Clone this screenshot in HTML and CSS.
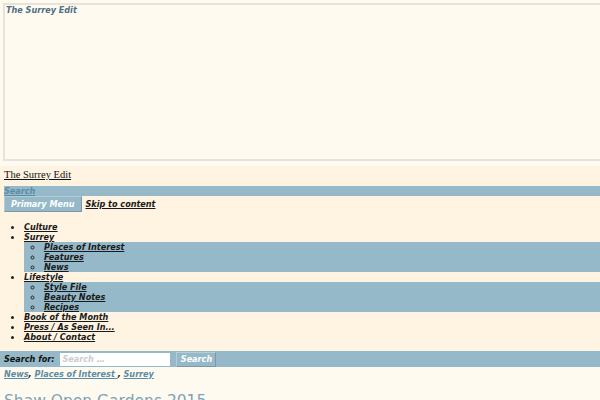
FILE: index.html
```html
<!DOCTYPE html>
<html>
<head>
<meta charset="utf-8">
<link rel="stylesheet" href="styles.css">
</head>
<body>
<div class="frame"><span class="frame-title">The Surrey Edit</span></div>
<header class="masthead">
  <a class="site-title" href="#">The Surrey Edit</a>
  <div class="search-toggle"><a href="#">Search </a></div>
  <div class="menu-row">
    <button class="menu-btn">Primary Menu</button>
    <a class="skip" href="#">Skip to content </a>
  </div>
  <ul class="menu">
    <li><a href="#">Culture </a></li>
    <li><a href="#">Surrey </a>
      <ul class="sub">
        <li><a href="#">Places of Interest </a></li>
        <li><a href="#">Features </a></li>
        <li><a href="#">News </a></li>
      </ul>
    </li>
    <li><a href="#">Lifestyle </a>
      <ul class="sub">
        <li><a href="#">Style File </a></li>
        <li><a href="#">Beauty Notes </a></li>
        <li><a href="#">Recipes </a></li>
      </ul>
    </li>
    <li><a href="#">Book of the Month </a></li>
    <li><a href="#">Press / As Seen In... </a></li>
    <li><a href="#">About / Contact </a></li>
  </ul>
</header>
<form class="search-form">
  <label class="search-label">Search for:</label>
  <input class="search-input" type="text" placeholder="Search …">
  <button class="search-btn" type="button">Search</button>
</form>
<div class="cats"><a href="#">News</a>, <a href="#">Places of Interest </a>, <a href="#">Surrey </a></div>
<h1 class="entry-title">Shaw Open Gardens 2015</h1>
</body>
</html>
```

FILE: styles.css
```css
html, body {
  margin: 0;
  padding: 0;
  background: #fffaf0;
  overflow: hidden;
}
body {
  font-family: "DejaVu Sans", sans-serif;
  font-stretch: condensed;
  font-size: 9px;
  line-height: 10px;
  color: #222;
}
.frame {
  margin: 3px 0 0 3px;
  border: 2px solid #e7e3db;
  border-right: none;
  padding: 0 0 0 1px;
  box-sizing: border-box;
  height: 158px;
}
.frame-title {
  font-weight: bold;
  font-style: italic;
  font-size: 9px;
  line-height: 10px;
  color: #4f6f82;
}
.masthead {
  margin-top: 5px;
  background: #fff3e1;
  padding: 3px 0 9px 4px;
}
.site-title {
  display: block;
  font-family: "Liberation Serif", serif;
  font-stretch: normal;
  font-size: 10.5px;
  line-height: 12px;
  color: #111;
  text-decoration: underline;
  width: max-content;
}
.search-toggle {
  margin-top: 5px;
  background: #95b9c9;
  height: 10px;
  line-height: 10px;
}
.search-toggle a {
  font-weight: bold;
  font-style: italic;
  color: #5b8ca5;
}
.menu-row {
  display: flex;
  align-items: flex-start;
  gap: 4px;
  height: 16px;
}
.menu-btn {
  font-family: "DejaVu Sans", sans-serif;
  font-stretch: condensed;
  font-weight: bold;
  font-style: italic;
  font-size: 9px;
  color: #fff;
  background: #95b9c9;
  border: 1px solid #7f98a6;
  border-top-color: #b5cdd8;
  border-left-color: #b5cdd8;
  padding: 0 6px;
  height: 16px;
  line-height: 12px;
  margin: 0;
}
.skip {
  font-weight: bold;
  font-style: italic;
  color: #1a1a1a;
  margin-top: 3px;
}
.menu {
  margin: 10px 0 0 0;
  padding-left: 20px;
  list-style: disc;
}
.menu li::marker {
  font-size: 11px;
}
.menu a {
  font-weight: bold;
  font-style: italic;
  color: #1a1a1a;
}
.sub {
  margin: 0;
  padding-left: 20px;
  background: #95b9c9;
  list-style: circle;
}
.search-form {
  display: flex;
  align-items: center;
  background: #95b9c9;
  height: 16px;
  margin: 0;
  padding-left: 4px;
}
.search-label {
  font-weight: bold;
  font-style: italic;
  color: #111;
  margin-right: 6px;
}
.search-input {
  width: 110px;
  height: 13px;
  box-sizing: border-box;
  border: none;
  padding: 0 2px;
  font-family: "DejaVu Sans", sans-serif;
  font-stretch: condensed;
  font-weight: bold;
  font-style: italic;
  font-size: 9px;
  background: #fff;
  margin: 0 6px 0 0;
}
.search-input::placeholder {
  color: #c9cdd0;
}
.search-btn {
  font-family: "DejaVu Sans", sans-serif;
  font-stretch: condensed;
  font-weight: bold;
  font-style: italic;
  font-size: 9px;
  color: #fff;
  background: #95b9c9;
  border: 1px solid #7f98a6;
  border-top-color: #b5cdd8;
  border-left-color: #b5cdd8;
  padding: 0 3px;
  height: 15px;
  line-height: 11px;
  margin: 0;
  width: 40px;
}
.cats {
  padding-left: 4px;
  margin-top: 2px;
  font-weight: bold;
  font-style: italic;
  color: #111;
}
.cats a {
  color: #5b8ca5;
}
.entry-title {
  margin: 12px 0 0 4px;
  font-family: "DejaVu Sans", sans-serif;
  font-stretch: normal;
  font-weight: normal;
  font-size: 15.5px;
  line-height: 20px;
  color: #7ca3b7;
}
```
